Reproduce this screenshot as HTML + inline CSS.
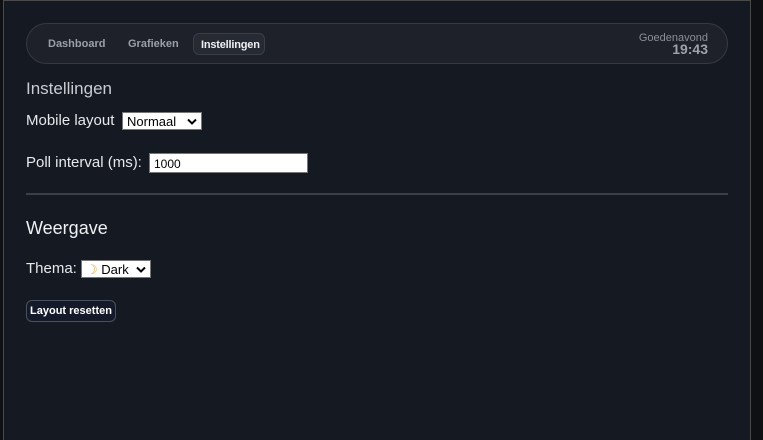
<!DOCTYPE html>
<html><head><meta charset="utf-8"><style>
html,body{margin:0;padding:0;width:763px;height:440px;overflow:hidden;background:#0f1013;font-family:"Liberation Sans",sans-serif}
.page{position:absolute;left:3px;top:0;width:748px;height:440px;background:#151922;border:1px solid #4a4a4a;border-bottom:none;box-sizing:border-box}
.nav{position:absolute;left:22px;top:22px;width:702px;height:41px;box-sizing:border-box;border:1px solid #353943;border-radius:21px;background:#1e2129}
.nav a{position:absolute;top:14px;font-size:11px;font-weight:bold;color:#9ba0a8}
.pill{position:absolute;left:166px;top:9px;width:72px;height:22px;box-sizing:border-box;border:1px solid #3a3e47;border-radius:6px;background:#262a32}
.pill span{position:absolute;left:7px;top:5px;font-size:11px;font-weight:bold;color:#eef0f3;letter-spacing:-0.2px}
.greet{position:absolute;right:19px;top:9px;text-align:right;color:#8b8f96;font-size:11px;line-height:10px}
.greet b{display:block;font-size:14px;line-height:13px;color:#9ea2a8}
.t{position:absolute;color:#e6e8ec}
.sel{position:absolute;background:#fff;border:1px solid #767676;box-sizing:border-box;font-family:"Liberation Sans",sans-serif;font-size:12px;color:#000}
.chev{position:absolute;right:4px;top:5px;width:10px;height:7px}
.btn{position:absolute;left:22px;top:299px;width:90px;height:22px;box-sizing:border-box;border:1px solid #4b5060;border-radius:6px;background:#141a2a;color:#fff;font-size:11px;font-weight:bold;text-align:center;line-height:20px}
</style></head><body>
<div class="page">
<div class="nav">
<a style="left:21px">Dashboard</a>
<a style="left:101px">Grafieken</a>
<div class="pill"><span>Instellingen</span></div>
<div class="greet">Goedenavond<b>19:43</b></div>
</div>
<div class="t" style="left:22px;top:78px;font-size:17px;color:#c9ccd1">Instellingen</div>
<div class="t" style="left:22px;top:111px;font-size:15px">Mobile layout</div>
<div class="sel" style="left:118px;top:111px;width:80px;height:18px;padding:2px 4px;font-size:13px;line-height:13px">Normaal<svg class="chev" viewBox="0 0 10 7"><path d="M1 1.5L5 5.5L9 1.5" stroke="#000" stroke-width="2" fill="none"/></svg></div>
<div class="t" style="left:22px;top:153px;font-size:15px">Poll interval (ms):</div>
<div class="sel" style="left:145px;top:152px;width:159px;height:20px;padding:3px 4px">1000</div>
<div style="position:absolute;left:22px;top:192px;width:702px;height:2px;background:#3b3f47"></div>
<div class="t" style="left:22px;top:217px;font-size:18px;color:#eef0f3">Weergave</div>
<div class="t" style="left:22px;top:259px;font-size:15px">Thema:</div>
<div class="sel" style="left:77px;top:259px;width:70px;height:18px;padding:2px 4px;font-size:13px;line-height:13px"><span style="color:#e8a33a">&#9789;</span> Dark<svg class="chev" viewBox="0 0 10 7"><path d="M1 1.5L5 5.5L9 1.5" stroke="#000" stroke-width="2" fill="none"/></svg></div>
<div class="btn">Layout resetten</div>
</div>
</body></html>
